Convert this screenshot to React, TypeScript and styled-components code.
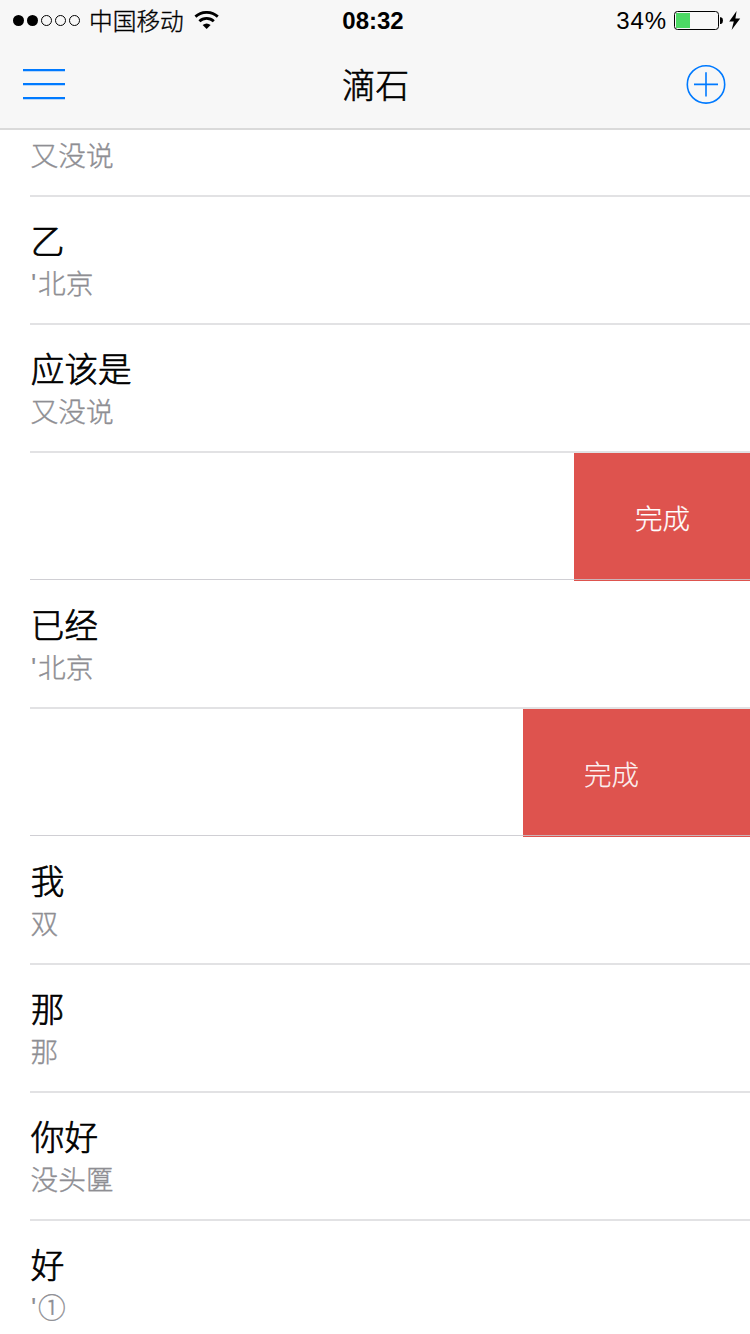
import React from "react";
import styled, { createGlobalStyle } from "styled-components";

const GlobalStyle = createGlobalStyle`
  * { box-sizing: border-box; }
  body {
    margin: 0;
    background: #fff;
    font-family: "Liberation Sans", "Noto Sans CJK SC", sans-serif;
    color: #000;
  }
`;

const Screen = styled.div`
  width: 750px;
  height: 1334px;
  overflow: hidden;
  display: flex;
  flex-direction: column;
  background: #fff;
`;

const Header = styled.header`
  flex: none;
  height: 130px;
  background: #f7f7f7;
  border-bottom: 2px solid #dadada;
`;

const StatusBar = styled.div`
  display: grid;
  grid-template-columns: 1fr auto 1fr;
  align-items: start;
  height: 40px;
  padding: 1px 9px 0 12px;
  font-size: 24px;
  line-height: 40px;
`;

const StatusGroup = styled.div<{ $end?: boolean }>`
  display: flex;
  align-items: center;
  height: 40px;
  justify-content: ${(p) => (p.$end ? "flex-end" : "flex-start")};
  svg { flex: none; display: block; }
`;

const Carrier = styled.span`
  margin: 0 10px 2px 8px;
  font-family: "Noto Sans CJK SC", sans-serif;
  font-weight: 300;
  font-size: 23.7px;
  line-height: 38px;
  -webkit-text-stroke: 0.35px currentColor;
`;

const Clock = styled.span`
  font-weight: 700;
  margin-right: 7px;
`;

const Percent = styled.span`
  letter-spacing: 0.9px;
  margin-right: 7px;
`;

const NavBar = styled.nav`
  display: grid;
  grid-template-columns: 1fr auto 1fr;
  align-items: center;
  height: 88px;
  padding: 0 24px 0 23px;
`;

const NavButton = styled.button<{ $end?: boolean }>`
  padding: 0;
  border: 0;
  background: none;
  justify-self: ${(p) => (p.$end ? "end" : "start")};
  svg { display: block; }
`;

const NavTitle = styled.h1`
  margin: 0 0 0 2px;
  font-family: "Noto Sans CJK SC", sans-serif;
  font-size: 33.6px;
  font-weight: 300;
  line-height: 48px;
  -webkit-text-stroke: 0.6px currentColor;
`;

const List = styled.ul`
  flex: 1;
  min-height: 0;
  margin: 0;
  padding: 0;
  list-style: none;
  overflow: hidden;
  display: flex;
  flex-direction: column;
`;

const Row = styled.li<{ $clipped?: boolean }>`
  flex: none;
  height: ${(p) => (p.$clipped ? 67 : 128)}px;
  margin-left: 30px;
  border-bottom: 2px solid #e2e2e4;
  overflow: hidden;
  display: flex;
  flex-direction: column;
  justify-content: flex-end;
  padding: 0 0 18px 0.5px;
`;

const Title = styled.div`
  height: 46px;
  padding: 1px 0 0 0.3px;
  font-size: 33.6px;
  line-height: 46px;
  font-weight: 300;
  -webkit-text-stroke: 0.7px currentColor;
`;

const Subtitle = styled.div`
  display: flex;
  height: 40px;
  font-size: 27.7px;
  line-height: 40px;
  font-weight: 300;
  color: #8e8e93;
  -webkit-text-stroke: 0.35px currentColor;
`;

const Tick = styled.span`
  width: 7.5px;
  padding-left: 0.5px;
  line-height: 37px;
  -webkit-text-stroke: 0;
`;

const SwipedRow = styled.li`
  flex: none;
  position: relative;
  height: 128px;
  display: flex;
  justify-content: flex-end;
  &::after {
    content: "";
    position: absolute;
    left: 30px;
    right: 0;
    bottom: 1px;
    height: 1px;
    background: rgba(200, 199, 204, 0.85);
  }
`;

const DoneButton = styled.button<{ $width: number; $fade: number }>`
  width: ${(p) => p.$width}px;
  height: 128px;
  padding: 0 0 1px 61px;
  border: 0;
  background: #de534e;
  color: rgba(255, 255, 255, ${(p) => p.$fade});
  font-family: "Noto Sans CJK SC", sans-serif;
  font-size: 27.5px;
  font-weight: 300;
  text-align: left;
  -webkit-text-stroke: 0.25px currentColor;
`;

type Item =
  | { kind: "entry"; title?: string; tick?: boolean; subtitle: string }
  | { kind: "swiped"; width: number; fade: number };

const items: Item[] = [
  { kind: "entry", subtitle: "又没说" },
  { kind: "entry", title: "乙", tick: true, subtitle: "北京" },
  { kind: "entry", title: "应该是", subtitle: "又没说" },
  { kind: "swiped", width: 176, fade: 1 },
  { kind: "entry", title: "已经", tick: true, subtitle: "北京" },
  { kind: "swiped", width: 227, fade: 0.92 },
  { kind: "entry", title: "我", subtitle: "双" },
  { kind: "entry", title: "那", subtitle: "那" },
  { kind: "entry", title: "你好", subtitle: "没头匴" },
  { kind: "entry", title: "好", tick: true, subtitle: "①" },
];

const SignalDots = () => (
  <svg width="69" height="14" viewBox="0 0 69 14">
    {[0, 1, 2, 3, 4].map((i) => (
      <circle
        key={i}
        cx={6.5 + i * 14}
        cy="6.5"
        r={i < 2 ? 5.5 : 5}
        fill={i < 2 ? "#000" : "none"}
        stroke={i < 2 ? "none" : "#000"}
        strokeWidth="1"
      />
    ))}
  </svg>
);

const Wifi = () => (
  <svg width="26" height="20" viewBox="0 0 26 20" fill="none" stroke="#000">
    <path d="M1.4 5.6A17 17 0 0 1 23.8 5.6" strokeWidth="2.8" />
    <path d="M5.4 10.3A10.3 10.3 0 0 1 19.8 10.3" strokeWidth="2.8" />
    <path d="M8.6 14A6.6 6.6 0 0 1 16.6 14L12.6 18Z" fill="#000" stroke="none" />
  </svg>
);

const Battery = () => (
  <svg width="55" height="20" viewBox="0 0 55 20">
    <rect x="0.5" y="0.5" width="44" height="18" rx="3" fill="none" stroke="#000" />
    <rect x="2" y="2" width="14" height="15" fill="#4cd964" />
    <path d="M46 6.2H47Q49 6.6 49 9.6T47 13H46Z" fill="#000" />
  </svg>
);

const Bolt = () => (
  <svg width="12" height="20" viewBox="0 0 12 20">
    <path d="M7.6 0L0.2 10.6H4.8L2.6 19L11.2 7.6H6.4Z" fill="#000" />
  </svg>
);

const MenuIcon = () => (
  <svg width="42" height="32" viewBox="0 0 42 32" stroke="#007aff" strokeWidth="2.3">
    <path d="M0 2.2H42M0 16.2H42M0 30.2H42" />
  </svg>
);

const AddIcon = () => (
  <svg width="40" height="40" viewBox="0 0 40 40" fill="none" stroke="#007aff" strokeWidth="1.6">
    <circle cx="20" cy="20.4" r="18.7" />
    <path d="M20 8.2V32.6M8 20.4H32" />
  </svg>
);

export default function App() {
  return (
    <Screen>
      <GlobalStyle />
      <Header>
        <StatusBar>
          <StatusGroup>
            <SignalDots />
            <Carrier>中国移动</Carrier>
            <Wifi />
          </StatusGroup>
          <Clock>08:32</Clock>
          <StatusGroup $end>
            <Percent>34%</Percent>
            <Battery />
            <Bolt />
          </StatusGroup>
        </StatusBar>
        <NavBar>
          <NavButton aria-label="Menu"><MenuIcon /></NavButton>
          <NavTitle>滴石</NavTitle>
          <NavButton $end aria-label="Add"><AddIcon /></NavButton>
        </NavBar>
      </Header>
      <List>
        {items.map((item, i) =>
          item.kind === "swiped" ? (
            <SwipedRow key={i}>
              <DoneButton $width={item.width} $fade={item.fade}>完成</DoneButton>
            </SwipedRow>
          ) : (
            <Row key={i} $clipped={!item.title}>
              {item.title && <Title>{item.title}</Title>}
              <Subtitle>
                {item.tick && <Tick>'</Tick>}
                {item.subtitle}
              </Subtitle>
            </Row>
          )
        )}
      </List>
    </Screen>
  );
}
